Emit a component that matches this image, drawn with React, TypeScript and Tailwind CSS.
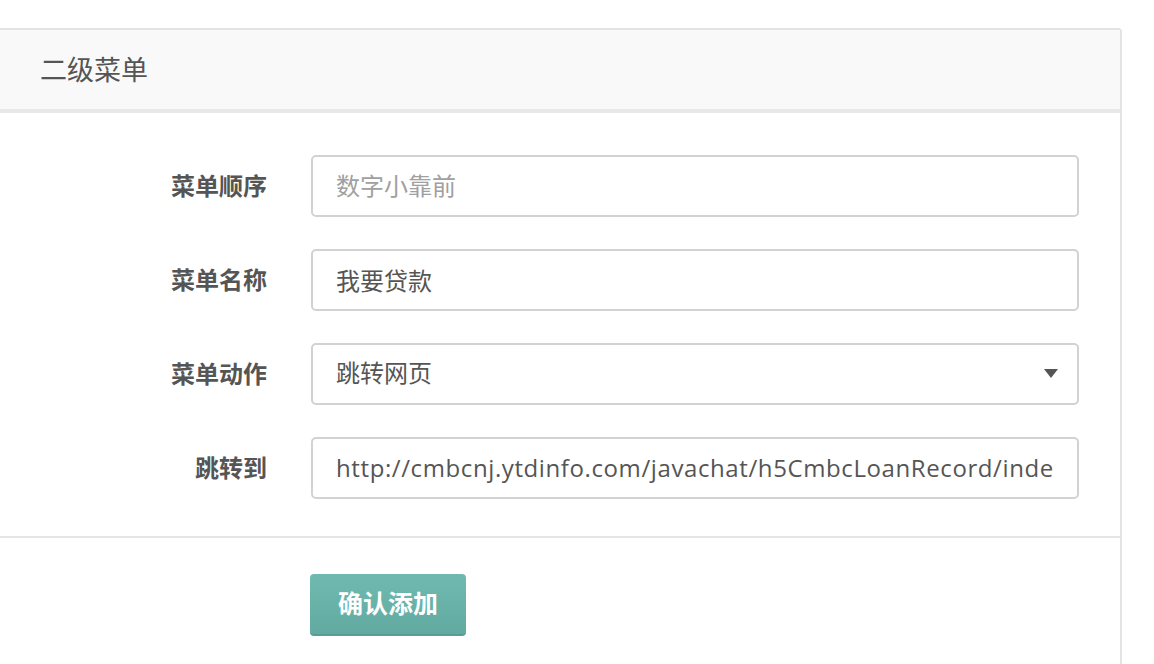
import React from 'react';

const fieldRows = [
    { label: '菜单顺序', placeholder: '数字小靠前', value: '' },
    { label: '菜单名称', placeholder: '', value: '我要贷款' },
];

const App: React.FC = () => {
    const font = { fontFamily: '"Open Sans", "Noto Sans CJK SC", sans-serif' };
    return (
        <div className="w-[1154px] h-[664px] bg-white overflow-hidden pt-[28px]" style={font}>
            {/* Panel */}
            <div className="w-[1124px] -ml-[2px] h-[700px] border-2 border-[#e3e3e3] rounded-tr-[4px] bg-white">
                <div className="h-[83px] bg-[#f9f9f9] border-b-[4px] border-[#e8e8e8] flex items-center pl-[40px]">
                    <h2 className="text-[27px] text-[#555] font-normal leading-none">二级菜单</h2>
                </div>

                <form className="pt-[42px] flex flex-col gap-[32px] pr-[41px]">
                    {fieldRows.map((row) => (
                        <div key={row.label} className="flex items-center">
                            <label className="w-[267px] text-right text-[24px] font-bold text-[#555]">{row.label}</label>
                            <input
                                type="text"
                                readOnly
                                defaultValue={row.value}
                                placeholder={row.placeholder}
                                className="ml-[44px] flex-1 h-[62px] border-2 border-[#d2d2d2] rounded-[5px] px-[23px] pb-[2px] text-[24px] text-[#555] placeholder:text-[#a0a0a0] outline-none"
                                style={font}
                            />
                        </div>
                    ))}

                    <div className="flex items-center">
                        <label className="w-[267px] text-right text-[24px] font-bold text-[#555]">菜单动作</label>
                        <div className="ml-[44px] flex-1 h-[62px] border-2 border-[#d2d2d2] rounded-[5px] pl-[23px] pr-[19px] pb-[2px] flex items-center justify-between text-[24px] text-[#555]">
                            <span>跳转网页</span>
                            <svg width="14" height="9" viewBox="0 0 14 9">
                                <path d="M0 0 H14 L7 9 Z" fill="#555" />
                            </svg>
                        </div>
                    </div>

                    <div className="flex items-center">
                        <label className="w-[267px] text-right text-[24px] font-bold text-[#555]">跳转到</label>
                        <input
                            type="text"
                            readOnly
                            defaultValue="http://cmbcnj.ytdinfo.com/javachat/h5CmbcLoanRecord/index.html"
                            className="ml-[44px] flex-1 h-[62px] border-2 border-[#d2d2d2] rounded-[5px] px-[23px] pb-[2px] text-[24px] tracking-[0.6px] text-[#555] outline-none"
                            style={font}
                        />
                    </div>
                </form>

                <div className="mt-[37px] border-t-2 border-[#e5e5e5] pt-[36px] pl-[310px]">
                    <button className="w-[156px] h-[62px] rounded-[4px] bg-gradient-to-b from-[#6fbab0] to-[#62aaa1] border-b-2 border-[#5a9d94] text-white text-[25px] font-bold">
                        确认添加
                    </button>
                </div>
            </div>
        </div>
    );
};

export default App;
